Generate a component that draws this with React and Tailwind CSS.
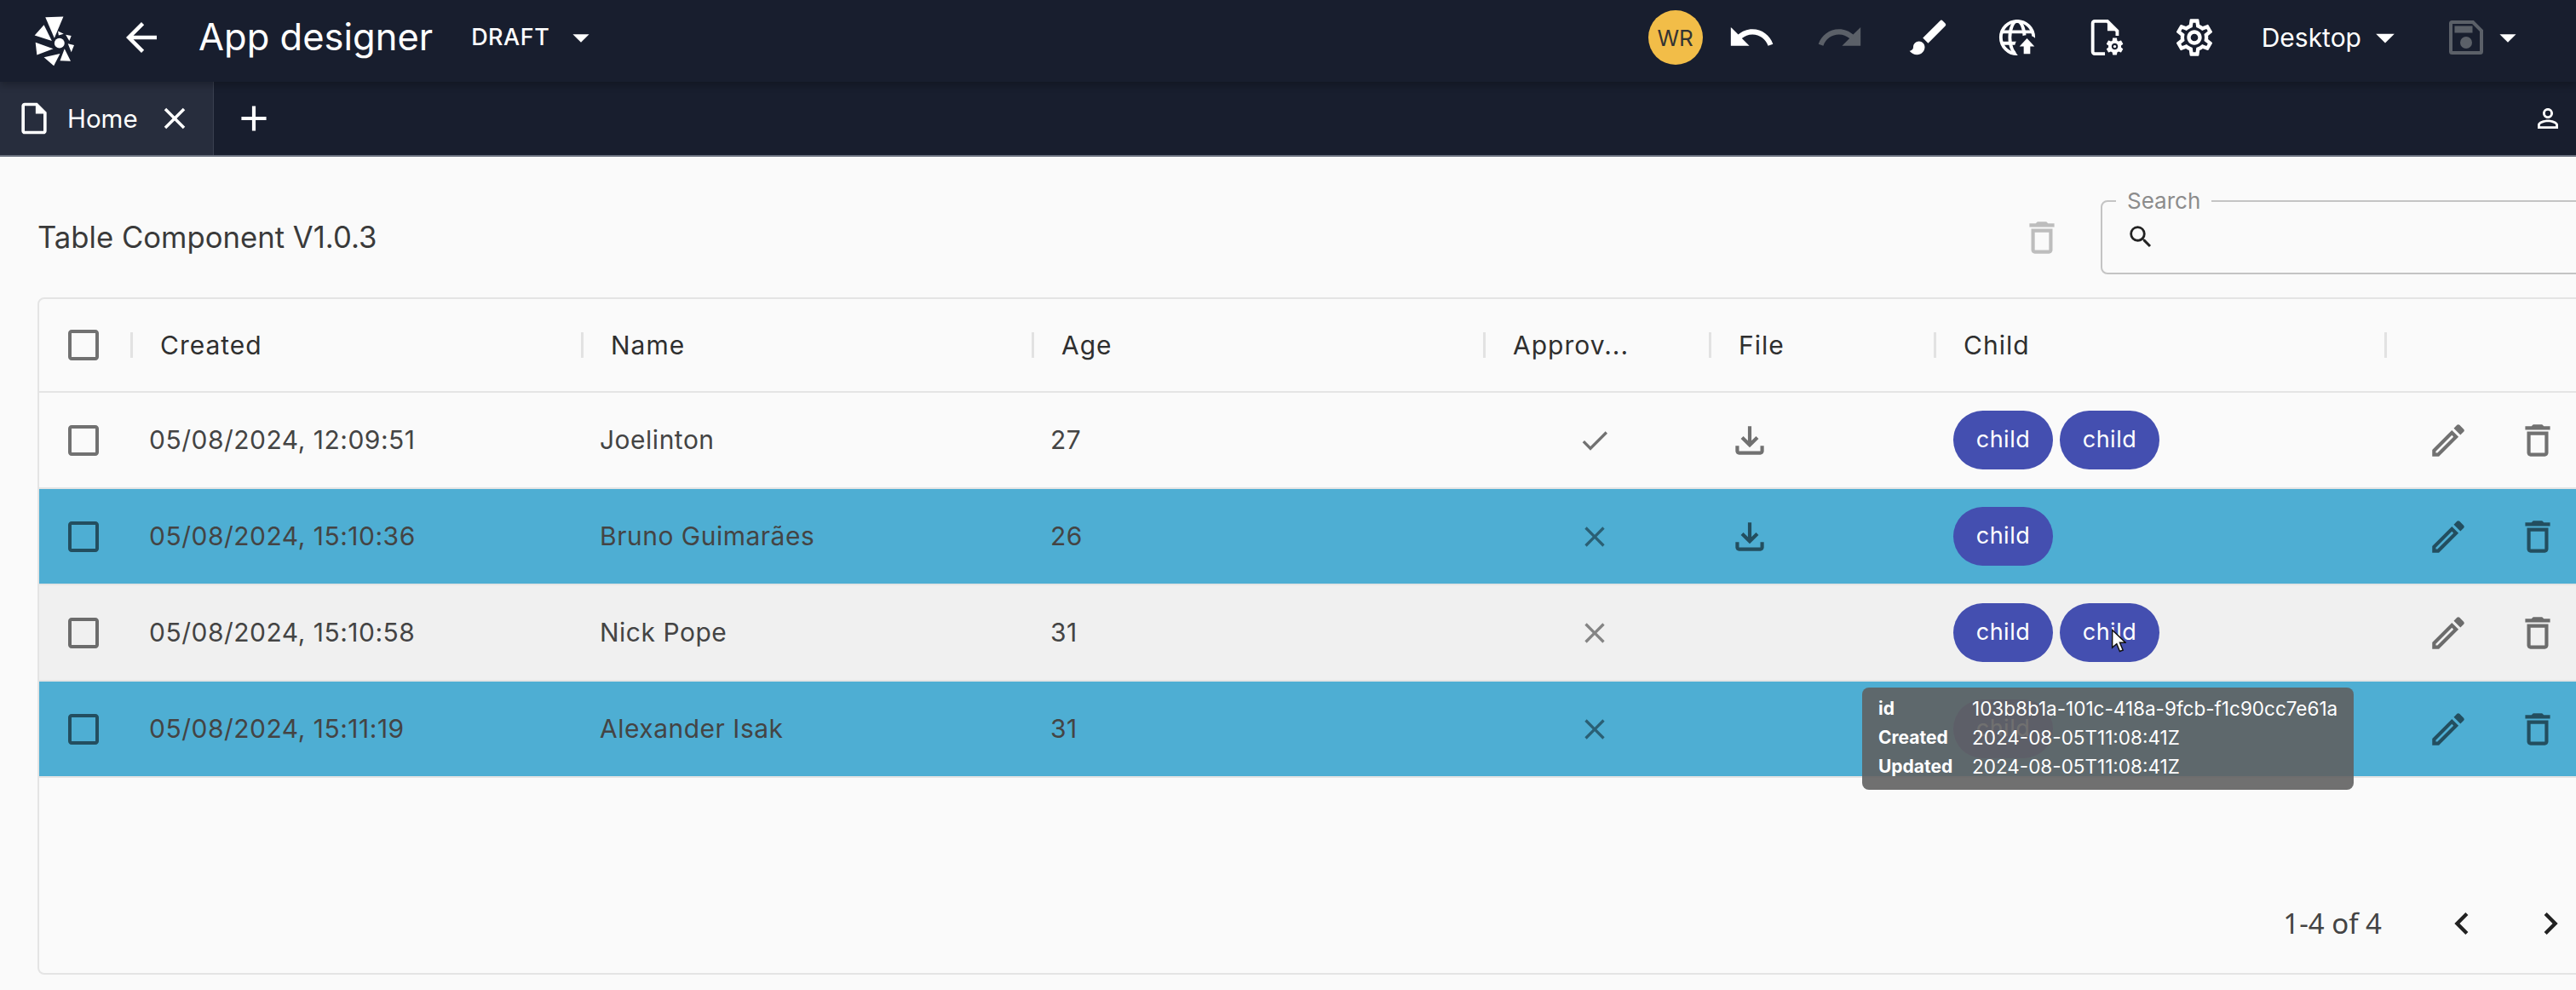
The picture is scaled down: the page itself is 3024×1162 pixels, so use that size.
import React from "react";
import {
  MdAdd,
  MdArrowBack,
  MdArrowDropDown,
  MdBrush,
  MdCheck,
  MdCheckBoxOutlineBlank,
  MdChevronLeft,
  MdChevronRight,
  MdClose,
  MdOutlineDelete,
  MdOutlineEdit,
  MdOutlineFileDownload,
  MdOutlineInsertDriveFile,
  MdOutlinePersonOutline,
  MdOutlineSettings,
  MdRedo,
  MdSearch,
  MdUndo,
} from "react-icons/md";

const GEAR =
  "M19.14 12.94c.04-.3.06-.61.06-.94 0-.32-.02-.64-.07-.94l2.03-1.58c.18-.14.23-.41.12-.61l-1.92-3.32c-.12-.22-.37-.29-.59-.22l-2.39.96c-.5-.38-1.03-.7-1.62-.94l-.36-2.54c-.04-.24-.24-.41-.48-.41h-3.84c-.24 0-.43.17-.47.41l-.36 2.54c-.59.24-1.13.57-1.62.94l-2.39-.96c-.22-.08-.47 0-.59.22L2.74 8.87c-.12.21-.08.47.12.61l2.03 1.58c-.05.3-.09.63-.09.94s.02.64.07.94l-2.03 1.58c-.18.14-.23.41-.12.61l1.92 3.32c.12.22.37.29.59.22l2.39-.96c.5.38 1.03.7 1.62.94l.36 2.54c.05.24.24.41.48.41h3.84c.24 0 .44-.17.47-.41l.36-2.54c.59-.24 1.13-.56 1.62-.94l2.39.96c.22.08.47 0 .59-.22l1.92-3.32c.12-.22.07-.47-.12-.61l-2.01-1.58zM12 15.6c-1.98 0-3.6-1.62-3.6-3.6s1.62-3.6 3.6-3.6 3.6 1.62 3.6 3.6-1.62 3.6-3.6 3.6z";

const columns = "grid grid-cols-[107px_529px_529px_530px_265px_264px_529px_806px] items-center";

const rows = [
  { created: "05/08/2024, 12:09:51", name: "Joelinton", age: "27", approved: true, file: true, chips: 2 },
  { created: "05/08/2024, 15:10:36", name: "Bruno Guimarães", age: "26", approved: false, file: true, chips: 1, bg: "bg-[#4eaed3]" },
  { created: "05/08/2024, 15:10:58", name: "Nick Pope", age: "31", approved: false, file: false, chips: 2, bg: "bg-[#f0f0f0]" },
  { created: "05/08/2024, 15:11:19", name: "Alexander Isak", age: "31", approved: false, file: false, chips: 1, bg: "bg-[#4eaed3]" },
];

const Logo = () => (
  <svg viewBox="120 60 145 180" className="w-[48px] h-[60px]" fill="#fff">
    <polygon points="160,66 224,64 192,140" />
    <polygon points="122,130 155,93 183,150" />
    <polygon points="125,155 188,178 130,200" />
    <polygon points="155,208 212,195 190,238" />
    <polygon points="228,178 250,222 212,220" />
    <polygon points="240,160 262,165 252,190" />
    <polygon points="232,128 252,132 245,150" />
    <polygon points="205,115 225,125 207,130" />
    <circle cx="210" cy="158" r="18" />
  </svg>
);

const GlobeUpload = () => (
  <svg viewBox="0 0 24 24" className="w-[46px] h-[46px]" fill="none" stroke="#fff" strokeWidth="2">
    <mask id="globeCut">
      <rect width="24" height="24" fill="#fff" stroke="none" />
      <circle cx="18" cy="18" r="7.5" fill="#000" stroke="none" />
    </mask>
    <g mask="url(#globeCut)">
      <circle cx="12" cy="12" r="10" />
      <ellipse cx="12" cy="12" rx="4.5" ry="10" />
      <path d="M2.5 8.5h19M2.5 15.5h19" />
    </g>
    <path d="M18 12.5l4.6 5H20v4.5h-4v-4.5h-2.6z" fill="#fff" stroke="none" />
  </svg>
);

const FileGear = () => (
  <svg viewBox="0 0 24 24" className="w-[46px] h-[46px]" fill="none">
    <path d="M11.5 22H5.2a1.2 1.2 0 0 1-1.2-1.2V3.2A1.2 1.2 0 0 1 5.2 2H13l6 6v3" stroke="#fff" strokeWidth="2" />
    <path d="M13 2l6 6h-6z" fill="#fff" />
    <svg x="11" y="11" width="13" height="13" viewBox="0 0 24 24">
      <path d={GEAR} fill="#fff" />
      <circle cx="12" cy="12" r="1.6" fill="#fff" />
    </svg>
  </svg>
);

const SaveIcon = () => (
  <svg viewBox="0 0 40 40" className="w-[40px] h-[40px] ml-[49px]" fill="none">
    <path d="M3.5 2h24.5l10 10v24.5a1.5 1.5 0 0 1-1.5 1.5H3.5A1.5 1.5 0 0 1 2 36.500V3.500A1.500 1.500 0 0 1 3.500 2z" stroke="#5b6068" strokeWidth="4" />
    <rect x="6.500" y="6.500" width="21" height="8" fill="#5b6068" />
    <circle cx="20" cy="26" r="7" fill="#5b6068" />
  </svg>
);

const ToolButton = ({ children }) => (
  <div className="w-[104px] h-[64px] flex items-center justify-center">{children}</div>
);

const TopBar = () => (
  <header className="relative z-10 h-[96px] shrink-0 pb-[8px] bg-[#181e2e] flex items-center text-white shadow-[0_4px_8px_rgba(0,0,0,0.25)]">
    <div className="ml-[40px] mt-[8px]">
      <Logo />
    </div>
    <MdArrowBack size={54} className="ml-[51px]" />
    <h1 className="ml-[40px] text-[43.5px] leading-none font-normal">App designer</h1>
    <span className="ml-[45px] text-[27px] font-medium tracking-[0.5px]">DRAFT</span>
    <MdArrowDropDown size={46} className="ml-[14px]" />
    <div className="ml-auto flex items-center">
      <div className="w-[64px] h-[64px] rounded-full bg-[#f2bd48] text-[#333] text-[26px] flex items-center justify-center">
        WR
      </div>
      <div className="ml-[5px] flex items-center">
        <ToolButton>
          <MdUndo size={58} />
        </ToolButton>
        <ToolButton>
          <MdRedo size={58} className="text-[#5b6068]" />
        </ToolButton>
        <ToolButton>
          <MdBrush size={54} />
        </ToolButton>
        <ToolButton>
          <GlobeUpload />
        </ToolButton>
        <ToolButton>
          <FileGear />
        </ToolButton>
        <ToolButton>
          <MdOutlineSettings size={52} />
        </ToolButton>
      </div>
      <span className="ml-[27px] text-[30px]">Desktop</span>
      <MdArrowDropDown size={52} className="ml-[2px]" />
      <SaveIcon />
      <MdArrowDropDown size={46} className="ml-[6px] mr-[57px]" />
    </div>
  </header>
);

const TabBar = () => (
  <div className="h-[88px] shrink-0 bg-[#181e2e] border-b-2 border-[#6b7280] flex items-stretch text-white">
    <div className="w-[251px] bg-[#272d3d] border-r border-[#3a404f] flex items-center">
      <MdOutlineInsertDriveFile size={44} className="ml-[18px]" />
      <span className="ml-[17px] text-[29.5px]">Home</span>
      <MdClose size={42} className="ml-[22px]" />
    </div>
    <MdAdd size={50} className="ml-[22px] self-center" />
    <MdOutlinePersonOutline size={36} className="ml-auto mr-[15px] self-center" />
  </div>
);

const HeaderCell = ({ label }) => (
  <div className="flex items-center h-full">
    <span className="w-[3px] h-[30px] bg-[#e2e2e2]" />
    <span className="ml-[32px] text-[30px] tracking-[1px] text-[#2f2f2f]">{label}</span>
  </div>
);

const Chip = () => (
  <span className="w-[117px] h-[69px] rounded-full bg-[#444fb0] text-white text-[27px] flex items-center justify-center">
    child
  </span>
);

const Row = ({ row }) => (
  <div className={`${columns} h-[113px] border-b-2 border-[#e4e4e4] text-[30px] tracking-[0.5px] text-[#444] ${row.bg || ""}`}>
    <MdCheckBoxOutlineBlank size={48} className="ml-[28px] text-black/55" />
    <span className="pl-[22px]">{row.created}</span>
    <span className="pl-[22px]">{row.name}</span>
    <span className="pl-[22px]">{row.age}</span>
    <div className="pl-[111px]">
      {row.approved ? <MdCheck size={40} className="text-black/55" /> : <MdClose size={40} className="text-black/45" />}
    </div>
    <div className="pl-[23px]">{row.file && <MdOutlineFileDownload size={50} className="text-black/55" />}</div>
    <div className="pl-[23px] flex gap-[8px]">
      {Array.from({ length: row.chips }).map((_, i) => (
        <Chip key={i} />
      ))}
    </div>
    <div className="flex items-center text-black/55">
      <MdOutlineEdit size={50} className="ml-[50px]" />
      <MdOutlineDelete size={50} className="ml-[55px]" />
    </div>
  </div>
);

const DataTable = () => (
  <div className="w-[3060px] h-[795px] shrink-0 border-2 border-[#e4e4e4] rounded-[8px] flex flex-col overflow-hidden">
    <div className={`${columns} h-[110px] shrink-0 border-b-2 border-[#e4e4e4]`}>
      <MdCheckBoxOutlineBlank size={48} className="ml-[28px] text-black/55" />
      <HeaderCell label="Created" />
      <HeaderCell label="Name" />
      <HeaderCell label="Age" />
      <HeaderCell label="Approv..." />
      <HeaderCell label="File" />
      <HeaderCell label="Child" />
      <HeaderCell label="" />
    </div>
    {rows.map((row) => (
      <Row key={row.name} row={row} />
    ))}
    <div className="flex-1 flex items-end justify-end pr-[56px] pb-[32px]">
      <span className="font-['Noto_Sans',sans-serif] text-[33px] leading-[52px] text-[#444] mr-[42px]">1-4 of 4</span>
      <div className="w-[104px] flex justify-center">
        <MdChevronLeft size={52} className="text-[#222]" />
      </div>
      <div className="w-[104px] flex justify-center">
        <MdChevronRight size={52} className="text-[#222]" />
      </div>
    </div>
  </div>
);

const Tooltip = () => (
  <div className="absolute left-[2186px] top-[807px] w-[577px] h-[120px] rounded-[8px] bg-[rgba(97,97,97,0.9)] text-white text-[22.5px] px-[19px] py-[8px] grid grid-cols-[110px_1fr] auto-rows-[34px] items-center">
    <span className="font-bold text-[21px]">id</span>
    <span className="whitespace-nowrap">103b8b1a-101c-418a-9fcb-f1c90cc7e61a</span>
    <span className="font-bold text-[21px]">Created</span>
    <span>2024-08-05T11:08:41Z</span>
    <span className="font-bold text-[21px]">Updated</span>
    <span>2024-08-05T11:08:41Z</span>
  </div>
);

const Pointer = () => (
  <svg viewBox="0 0 12 19" className="absolute left-[2478px] top-[738px] w-[18px] h-[28px]">
    <path d="M1 1v14l3.5-3 2.5 6 2.5-1-2.5-6h4.5z" fill="#fff" stroke="#111" strokeWidth="1" />
  </svg>
);

export default function App() {
  return (
    <div className="relative w-[3024px] h-[1162px] overflow-hidden bg-[#fafafa] flex flex-col font-[Inter,sans-serif]">
      <TopBar />
      <TabBar />
      <main className="pl-[44px] pt-[51px]">
        <div className="flex items-center w-[3060px] h-[87px] mb-[27px]">
          <h2 className="flex-1 text-[34.7px] font-normal text-[#3a3a3a]">Table Component V1.0.3</h2>
          <MdOutlineDelete size={50} className="mr-[44px] text-[#bdbdbd]" />
          <div className="relative w-[638px] h-[87px] border-2 border-[#c4c4c4] rounded-[8px] flex items-center">
            <span className="absolute left-[16px] top-[-16px] bg-[#fafafa] px-[13px] text-[26px] leading-[30px] text-[#8c8c8c]">
              Search
            </span>
            <MdSearch size={34} className="ml-[28px] mt-[-2px] text-[#222]" />
          </div>
        </div>
        <DataTable />
      </main>
      <Tooltip />
      <Pointer />
    </div>
  );
}
